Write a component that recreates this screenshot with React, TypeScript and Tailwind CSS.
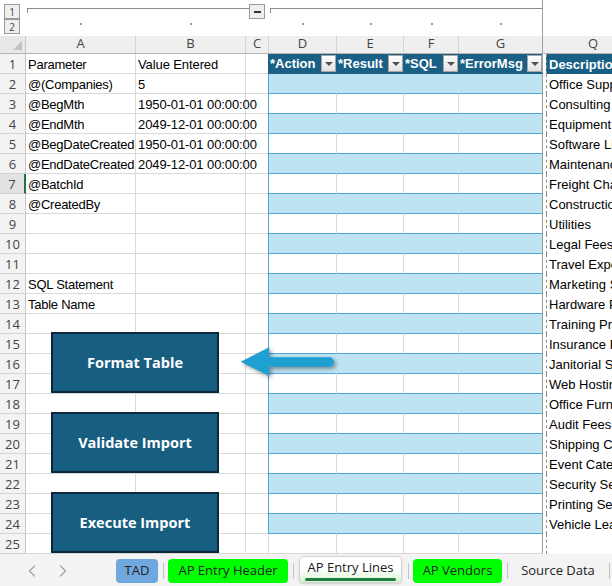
import { ChevronLeft, ChevronRight } from 'lucide-react';

// parameter block in columns A/B
const params: Record<number, [string, string]> = {
  1: ['Parameter', 'Value Entered'],
  2: ['@(Companies)', '5'],
  3: ['@BegMth', '1950-01-01 00:00:00'],
  4: ['@EndMth', '2049-12-01 00:00:00'],
  5: ['@BegDateCreated', '1950-01-01 00:00:00'],
  6: ['@EndDateCreated', '2049-12-01 00:00:00'],
  7: ['@BatchId', ''],
  8: ['@CreatedBy', ''],
  12: ['SQL Statement', ''],
  13: ['Table Name', ''],
};

const descriptions = [
  'Office Supplies',
  'Consulting Fees',
  'Equipment Rental',
  'Software License',
  'Maintenance',
  'Freight Charges',
  'Construction',
  'Utilities',
  'Legal Fees',
  'Travel Expenses',
  'Marketing Services',
  'Hardware Purchase',
  'Training Programs',
  'Insurance Premium',
  'Janitorial Services',
  'Web Hosting',
  'Office Furniture',
  'Audit Fees',
  'Shipping Costs',
  'Event Catering',
  'Security Services',
  'Printing Services',
  'Vehicle Lease',
];

const tableCols = [
  { w: 'w-[69px]', name: '*Action' },
  { w: 'w-[67px]', name: '*Result' },
  { w: 'w-[55px]', name: '*SQL' },
  { w: 'w-[84px]', name: '*ErrorMsg' },
];

const rows = Array.from({ length: 25 }, (_, i) => i + 1);

function OutlineBox({ label }: { label: string }) {
  return (
    <div className="w-[16px] h-[15px] border border-[#9a9a9a] bg-[#efefef] flex items-center justify-center text-[10px] leading-none text-[#444] font-['Open_Sans',sans-serif]">
      {label}
    </div>
  );
}

function OutlineBar() {
  const dots = [
    { w: 'w-[110px]', dot: true },
    { w: 'w-[110px]', dot: true },
    { w: 'w-[22px]', dot: false },
    { w: 'w-[69px]', dot: true },
    { w: 'w-[67px]', dot: true },
    { w: 'w-[55px]', dot: true },
    { w: 'w-[83px]', dot: true },
  ];
  return (
    <div className="flex h-[36px] shrink-0 bg-white">
      <div className="w-[26px] shrink-0 pt-[4px] pl-[4px]">
        <OutlineBox label="1" />
        <OutlineBox label="2" />
      </div>
      <div className="w-[516px] shrink-0 flex flex-col">
        <div className="flex items-start h-[20px]">
          <div className="ml-[1px] mt-[8px] w-[222px] h-[5px] border-t border-l border-[#8c8c8c]" />
          <div className="mt-[4px] w-[16px] h-[15px] border border-[#9a9a9a] bg-[#efefef] flex items-center justify-center">
            <div className="w-[7px] h-[2px] bg-[#333]" />
          </div>
          <div className="ml-[5px] mt-[8px] flex-1 h-[5px] border-t border-l border-[#8c8c8c]" />
        </div>
        <div className="flex h-[16px]">
          {dots.map((d, i) => (
            <div key={i} className={`${d.w} shrink-0 flex justify-center pt-[3px]`}>
              {d.dot && <div className="w-[2px] h-[2px] bg-[#999]" />}
            </div>
          ))}
        </div>
      </div>
      <div className="w-px shrink-0 bg-[#9e9e9e]" />
    </div>
  );
}

function ColumnHeaders() {
  const cols = [
    { w: 'w-[110px]', l: 'A' },
    { w: 'w-[110px]', l: 'B' },
    { w: 'w-[23px]', l: 'C' },
    { w: 'w-[68px]', l: 'D' },
    { w: 'w-[67px]', l: 'E' },
    { w: 'w-[55px]', l: 'F' },
  ];
  return (
    <div className="flex h-[18px] shrink-0 bg-[#efefef] border-b border-[#b5b5b5] font-['Open_Sans',sans-serif] text-[13px] leading-[15px] text-[#444]">
      <div className="w-[26px] shrink-0 border-r border-[#c6c6c6] bg-[#e8e8e8] relative">
        <svg className="absolute right-[2px] bottom-[2px]" width="10" height="10" viewBox="0 0 10 10">
          <polygon points="9,0 9,9 0,9" fill="#c2c2c2" />
        </svg>
      </div>
      {cols.map((c) => (
        <div key={c.l} className={`${c.w} shrink-0 border-r border-[#d5d5d5] text-center`}>
          {c.l}
        </div>
      ))}
      <div className="w-[84px] shrink-0 border-r border-[#9e9e9e] text-center">G</div>
      <div className="w-[100px] shrink-0 text-center">Q</div>
    </div>
  );
}

function FilterButton() {
  return (
    <div className="w-[15px] h-[17px] shrink-0 border border-[#a6a6a6] bg-linear-to-b from-[#ffffff] to-[#e2e2e2] flex items-center justify-center">
      <div className="w-0 h-0 border-x-[4px] border-x-transparent border-t-[4px] border-t-[#505050]" />
    </div>
  );
}

function TableCell({ row, col }: { row: number; col: number }) {
  const header = row === 1;
  const inTable = row <= 24;
  const band = inTable && !header && row % 2 === 0;
  const last = col === 3;

  let cls = `${tableCols[col].w} shrink-0 border-b `;
  if (col === 0) {
    cls += header
      ? 'border-l border-l-[#1a5f86] '
      : inTable
        ? 'border-l border-l-[#4fa6d8] '
        : 'border-l border-l-[#d9d9d9] ';
  }
  if (last) cls += 'border-r border-r-[#9e9e9e] ';
  else if (header) cls += 'border-r border-r-[#1a5f86] ';
  else if (band) cls += 'border-r border-r-transparent ';
  else cls += 'border-r border-r-[#d9d9d9] ';

  if (header) cls += 'border-b-[#1a5f86] bg-[#1a5f86] ';
  else if (inTable) cls += `border-b-[#4fa6d8] ${band ? 'bg-[#bee3f3]' : ''} `;
  else cls += 'border-b-[#d9d9d9] ';

  if (header) {
    return (
      <div className={`${cls} flex items-center justify-between pl-[1px]`}>
        <span className="font-bold text-white whitespace-nowrap pt-[1px]">{tableCols[col].name}</span>
        <FilterButton />
      </div>
    );
  }
  return <div className={cls} />;
}

function SheetRow({ n }: { n: number }) {
  const [a, b] = params[n] ?? ['', ''];
  const active = n === 7;
  const desc = n === 1 ? 'Description' : descriptions[n - 2] ?? '';
  return (
    <div className="flex h-[20px] shrink-0">
      <div
        className={`w-[26px] shrink-0 border-b border-b-[#d4d4d4] flex justify-center pt-[2px] font-['Open_Sans',sans-serif] text-[13px] leading-[17px] text-[#444] ${
          active ? 'bg-[#e2e2e2] border-r-2 border-r-[#217346]' : 'bg-[#f3f3f3] border-r border-r-[#c6c6c6]'
        }`}
      >
        {n}
      </div>
      <div className="w-[110px] shrink-0 border-r border-b border-[#d9d9d9] pl-[2px] pt-[2px] leading-[17px] tracking-[-0.25px] whitespace-nowrap overflow-hidden">
        {a}
      </div>
      <div className="w-[110px] shrink-0 border-r border-b border-[#d9d9d9] pl-[2px] pt-[2px] leading-[17px] tracking-[-0.1px] whitespace-nowrap">
        {b}
      </div>
      <div className="w-[22px] shrink-0 border-b border-[#d9d9d9]" />
      {tableCols.map((_, i) => (
        <TableCell key={i} row={n} col={i} />
      ))}
      <div className="w-[100px] shrink-0 pl-[3px]">
        <div
          className={`h-full border-l border-dashed border-[#8a8a8a] pl-[2px] pt-[2px] leading-[17px] whitespace-nowrap ${
            n === 1 ? 'bg-[#1a5f86] text-white font-bold' : ''
          }`}
        >
          {desc}
        </div>
      </div>
    </div>
  );
}

function MacroButton({ label, top }: { label: string; top: string }) {
  return (
    <div
      className={`absolute left-[51px] ${top} w-[168px] h-[61px] border-2 border-[#0c2838] bg-[#175e81] flex items-center justify-center text-white font-bold text-[14.5px] font-['Open_Sans',sans-serif]`}
    >
      {label}
    </div>
  );
}

function Separator({ ml }: { ml: string }) {
  return <div className={`${ml} w-px h-[16px] mb-[4px] shrink-0 bg-[#c4c4c4]`} />;
}

export default function App() {
  return (
    <div className="w-[612px] h-[586px] overflow-hidden bg-white flex flex-col">
      <div className="relative h-[554px] shrink-0 overflow-hidden font-['Liberation_Sans',Arial,sans-serif] text-[13px] text-black">
        <OutlineBar />
        <ColumnHeaders />
        {rows.map((n) => (
          <SheetRow key={n} n={n} />
        ))}

        {/* shapes floating on the sheet */}
        <MacroButton label="Format Table" top="top-[332px]" />
        <MacroButton label="Validate Import" top="top-[412px]" />
        <MacroButton label="Execute Import" top="top-[492px]" />
        <svg
          className="absolute left-[236px] top-[340px] drop-shadow-[2px_2px_2px_rgba(0,0,0,0.4)]"
          width="104"
          height="44"
          viewBox="0 0 104 44"
        >
          <path d="M4.7 21.8 L33.3 7.3 L33.3 17.3 L93.3 17.3 A4.7 4.7 0 0 1 93.3 26.7 L33.3 26.7 L33.3 36 Z" fill="#1fa0d2" />
        </svg>
      </div>

      <div className="h-[32px] shrink-0 bg-[#f3f3f3] flex items-end pb-[3px] font-['Open_Sans',sans-serif] text-[13px] text-[#222]">
        <div className="w-[116px] h-[24px] shrink-0 flex items-center text-[#a3a3a3]">
          <ChevronLeft className="ml-[22px]" size={20} strokeWidth={1.5} />
          <ChevronRight className="ml-[11px]" size={20} strokeWidth={1.5} />
        </div>
        <div className="w-[42px] h-[24px] shrink-0 rounded-[4px] bg-[#6fa8dc] flex items-center justify-center">TAD</div>
        <Separator ml="ml-[5px]" />
        <div className="ml-[4px] w-[120px] h-[24px] shrink-0 rounded-[4px] bg-[#00ff00] flex items-center justify-center">
          AP Entry Header
        </div>
        <Separator ml="ml-[5px]" />
        <div className="ml-[5px] w-[103px] h-[27px] shrink-0 rounded-[4px] border border-[#d4d4d4] bg-linear-to-b from-white via-white to-[#d3f5cc] shadow-[0_1px_2px_rgba(0,0,0,0.15)] flex flex-col items-center pt-[1px]">
          <span className="leading-[18px] text-[#1b1b1b]">AP Entry Lines</span>
          <div className="mt-[2px] w-[91px] h-[3px] rounded-full bg-[#1f7a44]" />
        </div>
        <Separator ml="ml-[6px]" />
        <div className="ml-[4px] w-[89px] h-[24px] shrink-0 rounded-[4px] bg-[#00ff00] flex items-center justify-center">
          AP Vendors
        </div>
        <Separator ml="ml-[5px]" />
        <div className="ml-[4px] w-[92px] h-[24px] shrink-0 flex items-center justify-center">Source Data</div>
        <Separator ml="ml-[5px]" />
      </div>
    </div>
  );
}
